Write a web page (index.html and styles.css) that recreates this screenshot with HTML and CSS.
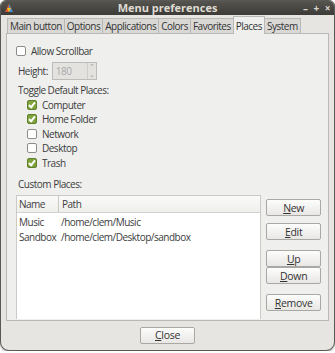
FILE: index.html
```html
<!DOCTYPE html>
<html>
<head>
<meta charset="utf-8">
<title>Menu preferences</title>
<link rel="stylesheet" href="styles.css">
</head>
<body>
<div class="win">
  <div class="titlebar">
    <svg class="appicon" width="10" height="10" viewBox="0 0 10 10">
      <path d="M1 9 L5 1 L9 9 Z" fill="#e05a2b"/>
      <path d="M5 1 L9 9 L5 9 Z" fill="#3b8fd6"/>
      <path d="M3 5 L7 5 L5 9 Z" fill="#f2c31b"/>
    </svg>
    <span class="title">Menu preferences</span>
    <span class="ctrls"><span>–</span><span>+</span><span>×</span></span>
  </div>
  <div class="content">
    <ul class="tabs">
      <li>Main button</li>
      <li>Options</li>
      <li>Applications</li>
      <li>Colors</li>
      <li>Favorites</li>
      <li class="current">Places</li>
      <li>System</li>
    </ul>
    <div class="panel">
      <div class="row chk"><span class="box"></span>Allow Scrollbar</div>
      <div class="row height">
        <span>Height:</span>
        <span class="spin"><span class="val">180</span><span class="arrows"><i>&#8963;</i><i>&#8964;</i></span></span>
      </div>
      <div class="row label">Toggle Default Places:</div>
      <div class="places">
        <div class="chk"><span class="box on"></span>Computer</div>
        <div class="chk"><span class="box on"></span>Home Folder</div>
        <div class="chk"><span class="box"></span>Network</div>
        <div class="chk"><span class="box"></span>Desktop</div>
        <div class="chk"><span class="box on"></span>Trash</div>
      </div>
      <div class="row label custom">Custom Places:</div>
      <div class="custombox">
        <div class="tree">
          <div class="thead"><span class="c1">Name</span><span class="c2">Path</span></div>
          <div class="trow"><span class="c1">Music</span><span class="c2">/home/clem/Music</span></div>
          <div class="trow"><span class="c1">Sandbox</span><span class="c2">/home/clem/Desktop/sandbox</span></div>
        </div>
        <div class="btns">
          <button><u>N</u>ew</button>
          <button><u>E</u>dit</button>
          <button class="gap"><u>U</u>p</button>
          <button><u>D</u>own</button>
          <button class="gap"><u>R</u>emove</button>
        </div>
      </div>
    </div>
    <div class="footer"><button class="close"><u>C</u>lose</button></div>
  </div>
</div>
</body>
</html>
```

FILE: styles.css
```css
body,div,ul,li{margin:0;padding:0;}
ul{list-style-type:none;}
body{background:#fff;font:10px/12px "Open Sans","DejaVu Sans",sans-serif;letter-spacing:-0.5px;color:#3c3c3c;}
.win{width:333px;height:349px;border:1px solid #5a5955;border-radius:6px 6px 9px 9px;background:#e6e5e2;overflow:hidden;display:flex;flex-direction:column;box-shadow:0 1px 2px rgba(0,0,0,.4);}
.titlebar{height:14px;background:linear-gradient(#55544f,#3c3b37);display:flex;align-items:center;position:relative;color:#dfdbd2;}
.appicon{margin-left:3px;}
.title{position:absolute;left:0;right:0;text-align:center;font-weight:700;font-size:11px;letter-spacing:0;color:#dfdbd2;}
.ctrls{margin-left:auto;margin-right:4px;display:flex;gap:6px;font-weight:700;font-size:10px;color:#d8d4cc;position:relative;}
.content{flex:1;display:flex;flex-direction:column;padding:0 5px;}
.tabs{display:flex;margin-top:2px;height:17px;align-items:flex-end;padding-left:1px;}
.tabs li{height:15px;line-height:15px;padding:0 2px;border:1px solid #b9b8b4;border-bottom:none;margin-right:-1px;background:#d9d8d5;white-space:nowrap;color:#333;}
.tabs li.current{height:17px;line-height:18px;background:#efefed;position:relative;z-index:1;}
.panel{flex:1;border:1px solid #b9b8b4;background:#efefed;margin-top:-1px;padding:10px 7px 1px 9px;display:flex;flex-direction:column;}
.row{display:flex;align-items:center;}
.chk{display:flex;align-items:center;height:14.5px;}
.box{width:8px;height:8px;border:1px solid #8e8d8a;border-radius:2px;background:#fff;margin-right:5px;position:relative;}
.box.on{background:#7fa43e;border-color:#5f7f2b;}
.box.on:after{content:"";position:absolute;left:2px;top:0;width:2px;height:5px;border:solid #fff;border-width:0 2px 2px 0;transform:rotate(40deg);}
.panel > .chk{margin-left:0;}
.height{margin-top:3px;gap:4px;padding-left:2px;}
.spin{display:flex;width:43px;height:16px;border:1px solid #bdbcb8;background:#e3e2df;color:#aaa;}
.spin .val{flex:1;padding-left:3px;line-height:16px;}
.arrows{width:8px;border-left:1px solid #cfcecb;display:flex;flex-direction:column;align-items:center;font-size:7px;line-height:8px;color:#999;}
.arrows i{font-style:normal;height:8px;}
.label{margin-top:3px;padding-left:2px;height:14px;}
.places{padding-left:11px;margin-top:1px;}
.custom{margin-top:7px;}
.custombox{display:flex;margin-top:4px;flex:1;}
.tree{width:245px;background:#fff;border:1px solid #cbcac6;border-bottom:none;}
.thead{display:flex;height:16px;line-height:16px;border-bottom:1px solid #d3d2ce;background:linear-gradient(#fafaf9,#efefec);}
.thead .c1{border-right:1px solid #c9c8c4;}
.trow{display:flex;height:15px;line-height:15px;}
.thead + .trow{margin-top:2px;}
.c1{width:39px;padding-left:2px;}
.c2{padding-left:3px;}
.btns{display:flex;flex-direction:column;margin-left:5px;margin-top:4px;width:55px;}
button{font:10.5px/12px "Open Sans","DejaVu Sans",sans-serif;letter-spacing:-0.3px;color:#333;height:17px;border:1px solid #a9a8a4;border-radius:2px;background:linear-gradient(#fdfdfc,#e8e7e4);padding:0;margin-bottom:7px;}
.btns button:nth-child(3){margin-bottom:0;}
.btns button.gap{margin-top:3px;}
.footer{height:29px;display:flex;justify-content:center;align-items:center;}
.close{width:55px;margin:0 0 1px 0;}
u{text-decoration:underline;}
```
